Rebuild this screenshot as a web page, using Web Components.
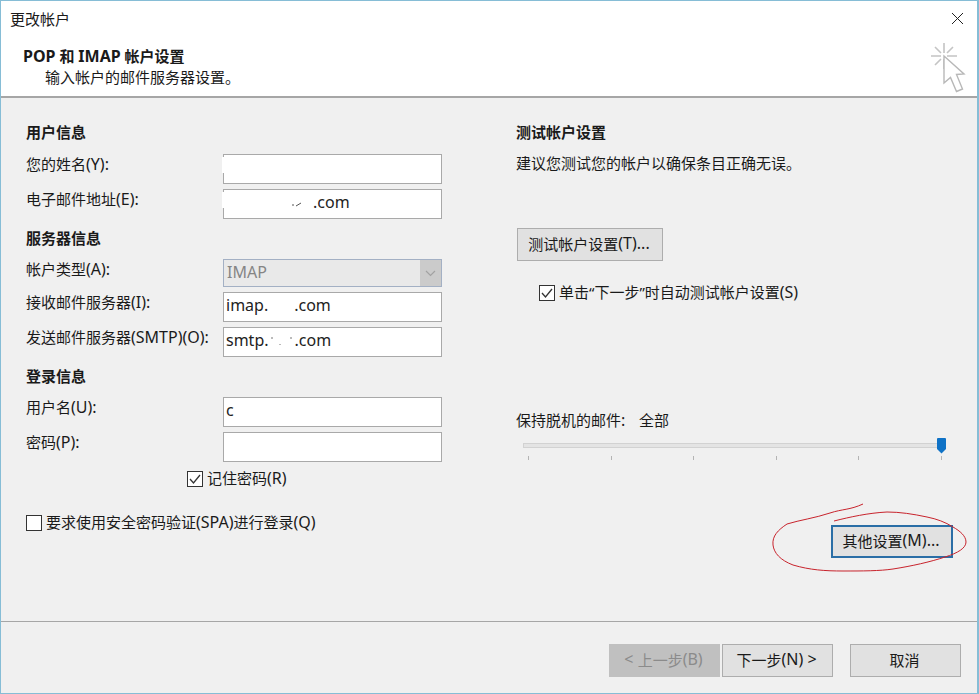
<!DOCTYPE html>
<html lang="zh-CN">
<head>
<meta charset="utf-8">
<title>更改帐户</title>
<style>
    html, body { margin: 0; padding: 0; background: #f0f0f0; }
    body { font-family: "Noto Sans", "Noto Sans CJK SC", sans-serif; font-size: 15px; color: #1a1a1a; }
    .l { font-size: 16px; }
</style>
</head>
<body>

<account-dialog>
    <section-title>用户信息</section-title>
    <form-row label="您的姓名(Y):" mask></form-row>
    <form-row label="电子邮件地址(E):" mask><svg width="87" height="10" viewBox="0 0 87 10"><path d="M66 7h2M70 8l5-3" stroke="#555" fill="none"/></svg>.com</form-row>
    <section-title>服务器信息</section-title>
    <form-combo label="帐户类型(A):" value="IMAP"></form-combo>
    <form-row label="接收邮件服务器(I):">imap.<span style="margin-left:26px">.com</span></form-row>
    <form-row label="发送邮件服务器(SMTP)(O):">smtp.<svg width="26" height="10" viewBox="0 0 26 10"><path d="M3 1v2M11 8v1M22 1v2" stroke="#777" fill="none"/></svg>.com</form-row>
    <section-title>登录信息</section-title>
    <form-row label="用户名(U):">c</form-row>
    <form-row label="密码(P):"></form-row>
    <check-box checked style="margin:9px 0 0 161px">记住密码<span class="l">(R)</span></check-box>
    <check-box style="margin:28px 0 0 0">要求使用安全密码验证<span class="l">(SPA)</span>进行登录<span class="l">(Q)</span></check-box>

    <section-title slot="right">测试帐户设置</section-title>
    <div slot="right" style="margin-top:11px;line-height:20px">建议您测试您的帐户以确保条目正确无误。</div>
    <push-button slot="right" style="margin:55px 0 0 1px;width:146px">测试帐户设置<span class="l">(T)...</span></push-button>
    <check-box slot="right" checked style="margin:24px 0 0 23px">单击“下一步”时自动测试帐户设置<span class="l">(S)</span></check-box>
    <div slot="right" style="margin-top:109px;line-height:20px;display:flex"><span style="width:123px">保持脱机的邮件<span class="l">:</span></span><span>全部</span></div>
    <range-slider slot="right" style="margin-top:8px"></range-slider>
    <push-button slot="right" focused style="margin:65px 0 0 315px;width:122px">其他设置<span class="l">(M)...</span></push-button>

    <push-button slot="footer" disabled style="width:111px"><span class="l">&lt;&nbsp;</span>上一步<span class="l">(B)</span></push-button>
    <push-button slot="footer" style="width:111px;margin-left:2px">下一步<span class="l">(N)&nbsp;&gt;</span></push-button>
    <push-button slot="footer" style="width:111px;margin-left:17px">取消</push-button>
</account-dialog>

<script>
// latin runs are a size up from the cjk ones in the original
function latin(text) {
    return text.replace(/[\x21-\x7e]+/g, m => `<span style="font-size:16px">${m}</span>`);
}

class AccountDialog extends HTMLElement {
    constructor() {
        super();
        this.attachShadow({ mode: 'open' });
    }

    connectedCallback() {
        this.shadowRoot.innerHTML = `
        <style>
            :host {
                display: flex;
                flex-direction: column;
                position: relative;
                box-sizing: border-box;
                width: 979px;
                height: 694px;
                border: 1px solid #86bdd6;
                border-right-width: 2px;
                background: #f0f0f0;
                overflow: hidden;
            }
            .titlebar {
                display: flex;
                justify-content: space-between;
                align-items: center;
                height: 35px;
                padding: 0 0 2px 9px;
                background: #fff;
            }
            .close { margin-right: 13px; }
            .head {
                display: flex;
                justify-content: space-between;
                height: 58px;
                padding-left: 22px;
                background: #fff;
                border-bottom: 2px solid #a6a6a6;
            }
            .head b { display: block; line-height: 20px; margin-top: 8px; font-weight: 700; }
            .head span.sub { display: block; line-height: 20px; margin: 1px 0 0 22px; }
            .sparkle { margin: 5px 10px 0 0; }
            .main { display: flex; flex: 1; min-height: 0; }
            .left { box-sizing: border-box; width: 515px; padding: 24px 0 0 25px; }
            .right { flex: 1; padding-top: 24px; }
            .foot {
                display: flex;
                justify-content: flex-end;
                height: 72px;
                padding: 22px 16px 0 0;
                box-sizing: border-box;
                border-top: 1px solid #a6a6a6;
            }
            .ink { position: absolute; left: -1px; top: -1px; pointer-events: none; }
        </style>
        <div class="titlebar">
            <span>更改帐户</span>
            <svg class="close" width="13" height="13" viewBox="0 0 13 13"><path d="M1 1L12 12M12 1L1 12" stroke="#222" stroke-width="1" fill="none"/></svg>
        </div>
        <div class="head">
            <div><b>${latin('POP 和 IMAP 帐户设置')}</b><span class="sub">输入帐户的邮件服务器设置。</span></div>
            <svg class="sparkle" width="36" height="54" viewBox="0 0 36 54" fill="none">
                <path d="M13 0V10M13 16V26M0 13H10M16 13H26M4 4L10 10M22 4L16 10M4 22L10 16" stroke="#c4c4c4" stroke-width="1.6"/>
                <path d="M13 13L33 31L25.500 31.500L31.500 46L25.500 48.500L19.500 34.500L13 40Z" fill="#fff" stroke="#b8b8b8" stroke-width="1.400"/>
            </svg>
        </div>
        <div class="main">
            <div class="left"><slot></slot></div>
            <div class="right"><slot name="right"></slot></div>
        </div>
        <div class="foot"><slot name="footer"></slot></div>
        <svg class="ink" width="979" height="694" viewBox="0 0 979 694" fill="none">
            <path d="M863 504C850 510 842 509 830 513C815 518 800 520 787 524C778 530 772 536 773 545C774 553 780 560 793 565C810 570 825 571 843 571C862 571 880 571 893 569C912 566 930 562 945 557C958 553 966 548 966 542C966 536 960 531 953 527C945 522 937 519 927 517C913 514 900 512 887 512C868 513 850 517 834 521" stroke="#c8232c" stroke-width="1"/>
        </svg>`;
    }
}

class SectionTitle extends HTMLElement {
    constructor() {
        super();
        this.attachShadow({ mode: 'open' });
    }

    connectedCallback() {
        this.shadowRoot.innerHTML = `
        <style>
            :host { display: block; font-weight: 700; line-height: 20px; margin: 9px 0 11px; }
            :host(:first-child) { margin: 0 0 12px; }
            :host([slot="right"]) { margin: 0; }
        </style>
        <slot></slot>`;
    }
}

class FormRow extends HTMLElement {
    constructor() {
        super();
        this.attachShadow({ mode: 'open' });
    }

    connectedCallback() {
        const mask = this.hasAttribute('mask');
        this.shadowRoot.innerHTML = `
        <style>
            :host { display: flex; align-items: center; height: 30px; margin-bottom: 5px; }
            .label { width: 197px; flex: none; position: relative; top: -5px; white-space: nowrap; }
            .input {
                position: relative;
                box-sizing: border-box;
                width: 219px;
                height: 30px;
                line-height: 25px;
                padding-left: 2px;
                font-size: 16px;
                background: #fff;
                border: 1px solid #a9a9a9;
                color: #222;
                white-space: nowrap;
            }
            .mask {
                display: ${mask ? 'block' : 'none'};
                position: absolute;
                left: -2px;
                top: 2px;
                width: 5px;
                height: 16px;
                background: #fff;
            }
        </style>
        <span class="label">${latin(this.getAttribute('label'))}</span>
        <div class="input"><span class="mask"></span><slot></slot></div>`;
    }
}

class FormCombo extends HTMLElement {
    constructor() {
        super();
        this.attachShadow({ mode: 'open' });
    }

    connectedCallback() {
        this.shadowRoot.innerHTML = `
        <style>
            :host { display: flex; align-items: center; height: 28px; margin-bottom: 5px; }
            .label { width: 197px; flex: none; position: relative; top: -4px; }
            .combo {
                display: flex;
                justify-content: space-between;
                box-sizing: border-box;
                width: 219px;
                height: 28px;
                line-height: 25px;
                padding-left: 3px;
                font-size: 16px;
                background: #e9e9e9;
                border: 1px solid #a3b0c4;
                color: #858585;
            }
            .arrow {
                display: flex;
                align-items: center;
                justify-content: center;
                width: 21px;
                background: #cbcbcb;
            }
        </style>
        <span class="label">${latin(this.getAttribute('label'))}</span>
        <div class="combo">
            <span>${this.getAttribute('value')}</span>
            <span class="arrow"><svg width="11" height="7" viewBox="0 0 11 7"><path d="M1 1L5.500 5.500L10 1" stroke="#a2a2a2" stroke-width="1.200" fill="none"/></svg></span>
        </div>`;
    }
}

class CheckBox extends HTMLElement {
    constructor() {
        super();
        this.attachShadow({ mode: 'open' });
    }

    connectedCallback() {
        const tick = this.hasAttribute('checked')
            ? '<svg width="14" height="14" viewBox="0 0 14 14"><path d="M2 7L5.500 11L12 3" stroke="#333" stroke-width="1.300" fill="none"/></svg>'
            : '';
        this.shadowRoot.innerHTML = `
        <style>
            :host { display: flex; align-items: center; gap: 4px; height: 16px; line-height: 16px; white-space: nowrap; }
            .box {
                display: flex;
                align-items: center;
                justify-content: center;
                box-sizing: border-box;
                width: 16px;
                height: 16px;
                background: #fff;
                border: 1px solid #333;
            }
            .text { padding-bottom: 3px; }
        </style>
        <span class="box">${tick}</span><span class="text"><slot></slot></span>`;
    }
}

class PushButton extends HTMLElement {
    constructor() {
        super();
        this.attachShadow({ mode: 'open' });
    }

    connectedCallback() {
        this.shadowRoot.innerHTML = `
        <style>
            :host {
                display: flex;
                align-items: center;
                justify-content: center;
                box-sizing: border-box;
                height: 33px;
                padding: 0 2px 3px 0;
                background: #e1e1e1;
                border: 1px solid #adadad;
                white-space: nowrap;
            }
            :host([focused]) { border: 2px solid #2a6ea6; }
            :host([disabled]) { background: #c0c0c0; border-color: #c0c0c0; color: #8b8b8b; }
        </style>
        <slot></slot>`;
    }
}

class RangeSlider extends HTMLElement {
    constructor() {
        super();
        this.attachShadow({ mode: 'open' });
    }

    connectedCallback() {
        const ticks = [0, 1, 2, 3, 4, 5].map(() => '<i></i>').join('');
        this.shadowRoot.innerHTML = `
        <style>
            :host { display: block; position: relative; width: 425px; height: 22px; margin-left: 7px; }
            .track {
                position: relative;
                top: 5px;
                height: 3px;
                background: #e4e4e4;
                border: 1px solid #d2d2d2;
                width: 416px;
            }
            .ticks { display: flex; justify-content: space-between; margin: 13px 0 0 5px; width: 414px; }
            i { display: block; width: 1px; height: 4px; background: #b4b4b4; }
            svg { position: absolute; left: 414px; top: 0; }
        </style>
        <div class="track"></div>
        <div class="ticks">${ticks}</div>
        <svg width="9" height="16" viewBox="0 0 9 16"><path d="M0 1Q0 0 1 0H8Q9 0 9 1V11L4.500 15.500L0 11Z" fill="#0f72c6"/></svg>`;
    }
}

customElements.define('section-title', SectionTitle);
customElements.define('form-row', FormRow);
customElements.define('form-combo', FormCombo);
customElements.define('check-box', CheckBox);
customElements.define('push-button', PushButton);
customElements.define('range-slider', RangeSlider);
customElements.define('account-dialog', AccountDialog);
</script>
</body>
</html>
